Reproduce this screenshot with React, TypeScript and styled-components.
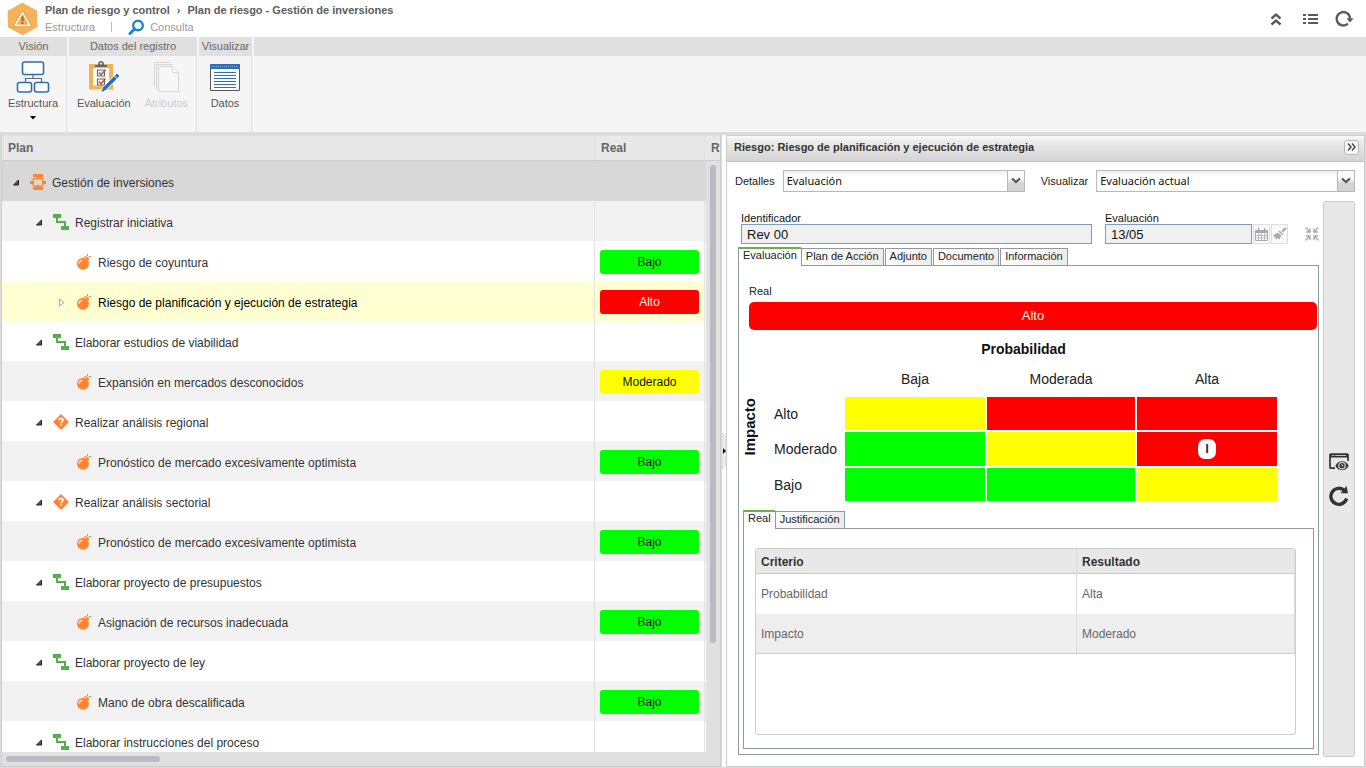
import React from "react";
import styled, { createGlobalStyle } from "styled-components";

const GlobalStyle = createGlobalStyle`
  * { box-sizing: border-box; }
  body {
    margin: 0;
    background: #dcdcdc;
    color: #222;
    font: 11px/14px "Liberation Sans", Arial, sans-serif;
  }
  button, input, select { font: inherit; color: inherit; margin: 0; }
  svg { display: block; flex: none; }
`;

const Shell = styled.div`
  display: flex;
  flex-direction: column;
  height: 100vh;
`;

/* ---------- title bar ---------- */

const TitleBar = styled.header`
  display: flex;
  align-items: center;
  flex: none;
  height: 37px;
  padding: 0 12px 0 7px;
  background: #fff;
`;

const Titles = styled.div`
  flex: 1;
  padding-left: 7px;
`;

const Crumbs = styled.nav`
  display: flex;
  gap: 7px;
  height: 17px;
  line-height: 16px;
  font-weight: bold;
  color: #5c5c5c;
`;

const CrumbLink = styled.a`
  color: inherit;
  text-decoration: none;
`;

const SubLinks = styled(Crumbs)`
  gap: 5px;
  font-weight: normal;
  color: #999;
  align-items: center;
`;

const Divider = styled.span`
  width: 1px;
  height: 10px;
  margin: 0 11px;
  background: #bbb;
`;

const TitleActions = styled.div`
  display: flex;
  align-items: center;
  gap: 14px;
`;

const IconButton = styled.button`
  display: flex;
  align-items: center;
  justify-content: center;
  min-width: 20px;
  padding: 0;
  border: 0;
  background: none;
`;

/* ---------- ribbon ---------- */

const Ribbon = styled.div`
  display: flex;
  flex: none;
  gap: 2px;
  height: 95px;
  background: #f5f5f5;
`;

const Group = styled.section<{ $width?: number }>`
  display: flex;
  flex-direction: column;
  flex: ${(p) => (p.$width ? `0 0 ${p.$width}px` : "1")};
`;

const GroupTitle = styled.h2`
  margin: 0;
  height: 19px;
  font-size: 11px;
  font-weight: normal;
  line-height: 19px;
  text-align: center;
  color: #666;
  background: #e0e0e0;
`;

const GroupBody = styled.div`
  display: flex;
  flex: 1;
  justify-content: center;
  gap: 14px;
  padding-top: 5px;
  border-right: 1px solid #e0e0e0;
`;

const RibbonButton = styled.button`
  display: flex;
  flex-direction: column;
  align-items: center;
  gap: 4px;
  padding: 0;
  border: 0;
  background: none;
  color: #555;
  line-height: 13px;
  &:disabled { color: #ccc; }
`;

/* ---------- workspace ---------- */

const Workspace = styled.main`
  display: grid;
  flex: 1;
  min-height: 0;
  grid-template-columns: minmax(0, 720fr) 5px minmax(0, 639fr);
  padding: 3px 1px 1px;
`;

const TreePanel = styled.section`
  display: flex;
  flex-direction: column;
  min-height: 0;
  border: 1px solid #ccc;
  border-top-color: #e0e0e0;
`;

const TreeBody = styled.div`
  position: relative;
  flex: 1;
  min-height: 0;
  overflow: hidden;
  background: #fff;
`;

const TreeTable = styled.table`
  width: 100%;
  table-layout: fixed;
  border-collapse: separate;
  border-spacing: 0;
  font-size: 12px;
  color: #333;
  th {
    height: 25px;
    padding: 0 6px;
    text-align: left;
    color: #666;
    background: #e8e8e8;
    border-bottom: 1px solid #ccc;
    overflow: hidden;
  }
  th + th, td + td { border-left: 1px solid #e2e2e2; }
`;

type Tone = "root" | "odd" | "even" | "selected";
const rowTones: Record<Tone, string> = {
  root: "#d8d8d8",
  odd: "#f2f2f2",
  even: "#fff",
  selected: "#ffffd2",
};

const TreeRow = styled.tr<{ $tone: Tone }>`
  background: ${(p) => rowTones[p.$tone]};
  color: ${(p) => (p.$tone === "selected" ? "#000" : "inherit")};
  td { height: 40px; padding: 0; }
  ${(p) => p.$tone === "root" && "td + td { border-left-color: #d8d8d8; }"}
`;

const Node = styled.div<{ $level: number }>`
  display: flex;
  align-items: center;
  gap: 6px;
  padding: 2px 0 0 ${(p) => p.$level * 23 + 10}px;
`;

const NodeName = styled.span`
  padding-top: 2px;
`;

const Toggle = styled.button`
  display: flex;
  align-items: center;
  width: 12px;
  height: 14px;
  padding: 0 0 0 1px;
  border: 0;
  background: none;
`;

type Risk = "Bajo" | "Moderado" | "Alto";
const riskColors: Record<Risk, string> = {
  Bajo: "#00ff00",
  Moderado: "#ffff00",
  Alto: "#ff0000",
};

const Badge = styled.div<{ $risk: Risk }>`
  margin: 2px 5px 0;
  height: 24px;
  border-radius: 3px;
  line-height: 24px;
  text-align: center;
  color: ${(p) => (p.$risk === "Alto" ? "#ffefd8" : "#111")};
  background: ${(p) => riskColors[p.$risk]};
`;

const VerticalScroll = styled.div`
  position: absolute;
  top: 25px;
  right: 0;
  bottom: 0;
  width: 14px;
  padding: 4px;
  background: #e0e0e0;
`;

const VerticalThumb = styled.div`
  width: 6px;
  height: 82%;
  border-radius: 3px;
  background: #bababf;
`;

const HorizontalScroll = styled.div`
  flex: none;
  height: 14px;
  padding: 4px;
  background: #e0e0e0;
`;

const HorizontalThumb = styled.div`
  width: 154px;
  height: 6px;
  border-radius: 3px;
  background: #bababf;
`;

const Splitter = styled.div`
  display: flex;
  align-items: center;
  border-left: 1px solid #dcdcdc;
  background: #fff;
`;

/* ---------- detail panel ---------- */

const DetailPanel = styled.section`
  display: flex;
  flex-direction: column;
  min-height: 0;
  border: 1px solid #ccc;
  background: #fff;
`;

const PanelHeader = styled.div`
  display: flex;
  align-items: center;
  justify-content: space-between;
  flex: none;
  height: 26px;
  padding: 0 5px 3px 7px;
  border-bottom: 1px solid #c4c4c4;
  background: linear-gradient(#fafafa, #ececec 20%, #d4d4d4);
`;

const PanelTitle = styled.h1`
  margin: 0;
  font-size: 11px;
  color: #333;
`;

const CollapseButton = styled.button`
  display: flex;
  align-items: center;
  justify-content: center;
  width: 15px;
  height: 15px;
  padding: 0;
  border: 1px solid #b8b8b8;
  border-radius: 3px;
  background: #f8f8f8;
`;

const Filters = styled.div`
  display: flex;
  align-items: center;
  flex: none;
  gap: 8px;
  padding: 8px 9px 9px 8px;
`;

const Combo = styled.span<{ $grow: number }>`
  display: grid;
  flex: ${(p) => p.$grow} 1 0;
  height: 22px;
  border: 1px solid #b5b8bd;
  background: linear-gradient(#f0f0f0, #fff 30%);
  & + label { margin-left: 8px; }
`;

const ComboSelect = styled.select`
  grid-area: 1 / 1;
  appearance: none;
  padding: 0 20px 0 3px;
  border: 0;
  border-radius: 0;
  background: none;
  font: 11px/18px "Noto Sans", sans-serif;
  color: #111;
`;

const ComboArrow = styled.span`
  grid-area: 1 / 1;
  display: flex;
  align-items: center;
  justify-content: center;
  justify-self: end;
  width: 17px;
  border-left: 1px solid #b5b8bd;
  background: linear-gradient(#fafafa 40%, #d4d4d4 60%);
  pointer-events: none;
`;

const DetailBody = styled.div`
  display: flex;
  flex: 1;
  min-height: 0;
  gap: 4px;
  padding: 0 9px 9px 11px;
`;

const DetailMain = styled.div`
  display: flex;
  flex: 1;
  flex-direction: column;
  min-width: 0;
  padding: 11px 0 2px;
`;

const SideStrip = styled.aside`
  display: flex;
  flex-direction: column;
  align-items: center;
  justify-content: center;
  gap: 14px;
  width: 32px;
  border: 1px solid #ccc;
  border-radius: 3px;
  background: #e8e8e8;
`;

const Fields = styled.div`
  display: flex;
  align-items: flex-end;
  margin-bottom: 3px;
  padding-left: 3px;
`;

const Field = styled.label<{ $width?: number }>`
  display: flex;
  flex-direction: column;
  flex: ${(p) => (p.$width ? `0 0 ${p.$width}px` : "1")};
  margin-right: ${(p) => (p.$width ? 1 : 13)}px;
  line-height: 12px;
  color: #111;
`;

const FieldInput = styled.input`
  width: 100%;
  height: 20px;
  padding: 0 5px;
  border: 1px solid #7f9db9;
  border-radius: 0;
  background: #f0f0f0;
  font-size: 13px;
`;

const FieldButton = styled.button`
  display: flex;
  align-items: center;
  justify-content: center;
  width: 17px;
  height: 20px;
  margin-right: 1px;
  padding: 0;
  border: 1px solid #ddd;
  background: #fafafa;
`;

const ShrinkButton = styled(IconButton)`
  min-width: 14px;
  height: 20px;
  margin-left: 16px;
`;

const TabBar = styled.div`
  display: flex;
  align-items: flex-end;
  flex: none;
  height: 19px;
  margin-bottom: -1px;
  z-index: 1;
`;

const Tab = styled.button<{ $active?: boolean }>`
  height: ${(p) => (p.$active ? 19 : 18)}px;
  margin-right: ${(p) => (p.$active ? 0 : 1)}px;
  padding: ${(p) => (p.$active ? "0 4px 5px" : "0 4px 2px")};
  border: 1px solid #8f9a9f;
  border-width: ${(p) => (p.$active ? "2px 0 0 1px" : "1px")};
  border-top-color: ${(p) => (p.$active ? "#6ab04c" : "#8f9a9f")};
  background: ${(p) => (p.$active ? "#fff" : "linear-gradient(90deg, #fff, #ececec)")};
  line-height: 12px;
`;

const TabPage = styled.div<{ $inner?: boolean }>`
  display: flex;
  flex-direction: column;
  flex: 1;
  min-height: 0;
  padding: ${(p) => (p.$inner ? "19px 17px 13px 11px" : "18px 0 5px")};
  border: 1px solid #8f9a9f;
`;

const RealLabel = styled.span`
  margin: 0 0 4px 10px;
`;

const RealBar = styled.div`
  flex: none;
  height: 28px;
  margin: 0 1px 5px 10px;
  border-radius: 5px;
  background: #ff0000;
  color: #ffefd8;
  font-size: 13px;
  line-height: 28px;
  text-align: center;
`;

const MatrixArea = styled.div`
  display: flex;
  align-items: center;
  flex: none;
  margin-bottom: 7px;
`;

const AxisLabel = styled.span`
  width: 22px;
  padding-bottom: 16px;
  margin-right: 7px;
  font-size: 15px;
  line-height: 22px;
  font-weight: bold;
  color: #111;
  writing-mode: vertical-rl;
  transform: rotate(180deg);
`;

const Matrix = styled.table`
  width: 511px;
  table-layout: fixed;
  border-spacing: 2px;
  font-size: 14px;
  color: #222;
  th { height: 33px; padding: 0; font-weight: normal; }
  thead tr:first-child th { height: 24px; font-weight: bold; color: #111; }
  thead tr:last-child th, thead tr:last-child td { height: 32px; padding: 0; }
  tbody th { padding-left: 4px; text-align: left; }
  tbody tr:nth-child(2) th { height: 34px; }
`;

const MatrixCell = styled.td<{ $risk: Risk }>`
  padding: 0;
  text-align: center;
  background: ${(p) => riskColors[p.$risk]};
`;

const Marker = styled.span`
  display: block;
  width: 18px;
  height: 20px;
  margin: 0 auto;
  border-radius: 7px;
  background: #fff;
  color: #333;
  font-size: 13px;
  font-weight: bold;
  line-height: 20px;
`;

const SubTabs = styled.div`
  display: flex;
  flex: 1;
  flex-direction: column;
  min-height: 0;
  padding: 0 4px;
`;

const ResultBox = styled.div`
  flex: 1;
  min-height: 0;
  border: 1px solid #ccc;
  border-radius: 3px;
`;

const ResultTable = styled.table`
  width: 100%;
  table-layout: fixed;
  border-spacing: 0;
  font-size: 12px;
  color: #666;
  th, td { height: 40px; padding: 0 5px; text-align: left; border-right: 1px solid #ddd; }
  th:first-child, td:first-child { border-right: 0; }
  th + th, td + td { border-left: 1px solid #ddd; }
  th { height: 25px; padding-top: 2px; color: #333; background: #e8e8e8; border-bottom: 1px solid #ccc; }
  tbody tr:last-child td { background: #eee; border-bottom: 1px solid #ccc; }
`;

/* ---------- icons ---------- */

const AppLogo = () => (
  <svg width="31" height="34" viewBox="0 0 31 34">
    <path d="M15.5 2 29 9.500V24.500L15.500 32 2 24.500V9.500Z" fill="#f4b25a" stroke="#f4b25a" strokeWidth="2.500" strokeLinejoin="round" />
    <path d="M15.500 10.500 23 23.500H8Z" fill="#f0a848" stroke="#d79a55" strokeWidth="3" strokeLinejoin="round" />
    <path d="M15.500 10.500 23 23.500H8Z" fill="#f3b158" stroke="#fff" strokeWidth="1.500" strokeLinejoin="round" />
    <path d="M15.500 14.500v4.500M15.500 20v2" stroke="#a0581c" strokeWidth="1.800" />
  </svg>
);

const SearchIcon = () => (
  <svg width="17" height="16" viewBox="0 0 17 16">
    <circle cx="10" cy="6.500" r="4.800" fill="none" stroke="#1d86c8" strokeWidth="2.400" />
    <path d="M6.500 10 2 14.500" stroke="#1d86c8" strokeWidth="3" strokeLinecap="round" />
  </svg>
);

const UpIcon = () => (
  <svg width="20" height="20" viewBox="0 0 20 20" fill="none" stroke="#5a5a5a" strokeWidth="2.400">
    <path d="M5.500 9.500 10 5.500l4.500 4M5.500 15.500 10 11.500l4.500 4" />
  </svg>
);

const ListIcon = () => (
  <svg width="20" height="20" viewBox="0 0 20 20" fill="#5a5a5a">
    <path d="M3 5h3v2H3zM8 5h10v2H8zM3 9h3v2H3zM8 9h10v2H8zM3 13h3v2H3zM8 13h10v2H8z" />
  </svg>
);

const ReloadIcon = () => (
  <svg width="20" height="20" viewBox="0 0 20 20">
    <path d="M14 14.500A6.700 6.700 0 1 1 16 9.500" fill="none" stroke="#5a5a5a" strokeWidth="2.400" />
    <path d="M12.500 9.200H19.500L16 13.500Z" fill="#5a5a5a" />
  </svg>
);

const StructureIcon = () => (
  <svg width="34" height="32" viewBox="0 0 34 32">
    <path d="M17 14v4M9.500 21v-3.500h16V21" fill="none" stroke="#666" strokeWidth="1.200" />
    <g fill="#fff" stroke="#2e6db0" strokeWidth="1.600">
      <rect x="6.500" y="1" width="21" height="12.500" rx="2" />
      <rect x="1.500" y="21.500" width="14" height="9.500" rx="2" />
      <rect x="18.500" y="21.500" width="14" height="9.500" rx="2" />
    </g>
  </svg>
);

const EvaluationIcon = () => (
  <svg width="32" height="32" viewBox="0 0 32 32">
    <path d="M3 5h20v21.500H3z" fill="#fff" stroke="#f3b158" strokeWidth="4" />
    <path d="M7 6V4h3c0-2.500 1-4 3-4s3 1.500 3 4h3v2Z" fill="#666" />
    <circle cx="13" cy="2.500" r="1" fill="#fff" />
    <path d="M9.500 9h7v6h-7zM9.500 18h7v6h-7z" fill="#fff" stroke="#666" strokeWidth="1.200" />
    <path d="m11 11.500 2 2.200 4.500-5M11 20.500l2 2.200 4.500-5" fill="none" stroke="#b0622c" strokeWidth="1.700" />
    <path d="M12.500 32 14.500 26.500 29 12l3 3-14.500 14.500Z" fill="#2f6fb5" stroke="#fff" strokeWidth="1" />
    <path d="m26 14.500 3.500 3.500" stroke="#fff" strokeWidth="1" />
  </svg>
);

const AttributesIcon = () => (
  <svg width="28" height="32" viewBox="0 0 28 32" fill="#f7f7f7" stroke="#d6d6d6">
    <path d="M2.500 26.500v-25h16M4.500 28.500v-25h16" fill="none" />
    <path d="M6.500 5.500h14l6 6v19h-20z" />
    <path d="M20.500 5.500v6h6" />
  </svg>
);

const DataIcon = () => (
  <svg width="32" height="32" viewBox="0 0 32 32">
    <path d="M1.500 4.500h29v25h-29z" fill="#fff" stroke="#555" />
    <path d="M1 3h30v5H1z" fill="#2f6fb5" />
    <path d="M3 5.500h26" stroke="#79a9dc" strokeDasharray="1 1" />
    <path d="M5 11.500h22M5 14.500h22M5 17.500h22M5 20.500h22M5 23.500h22M5 26.500h22" stroke="#2f6fb5" strokeWidth="1.200" />
  </svg>
);

const CaretIcon = () => (
  <svg width="6" height="6" viewBox="0 0 6 6"><path d="M0 2h6L3 5.500z" fill="#000" /></svg>
);

const ExpandedMark = () => (
  <svg width="7" height="7" viewBox="0 0 7 7">
    <path d="M5.500 1v5h-5z" fill="#555" stroke="#222" strokeWidth="1" />
  </svg>
);

const CollapsedMark = () => (
  <svg width="7" height="9" viewBox="0 0 7 9">
    <path d="M.5 1v7l4.500-3.500z" fill="#fff" stroke="#aaa" />
  </svg>
);

const ProjectIcon = () => (
  <svg width="16" height="16" viewBox="0 0 16 16" fill="#ff8533">
    <path d="M3 0h10v3H3zM7 3h2v2H7zM7 11h2v2H7zM3 13h10v3H3zM0 7h4v3H0zM12 7h4v3h-4z" />
    <path d="M3 6q0-1.500 1.500-1.500h7Q13 4.500 13 6v5q0 1-1.500 1h-7Q3 12 3 11z" fill="none" stroke="#ff8533" strokeWidth="1.300" />
  </svg>
);

const ProcessIcon = () => (
  <svg width="16" height="16" viewBox="0 0 16 16" fill="#52b04c">
    <path d="M0 0h8v4H5v3h8v5h3v4H8v-4h3V9H3V4H0z" />
  </svg>
);

const DecisionIcon = () => (
  <svg width="16" height="16" viewBox="0 0 16 16">
    <path d="m8 0 8 8-8 8-8-8z" fill="#ff8533" />
    <path d="M6 6.200C6 3.800 10 3.800 10 6.200 10 7.600 8 7.600 8 9.200M8 10.500v1.600" fill="none" stroke="#fff" strokeWidth="1.600" />
  </svg>
);

const BombIcon = () => (
  <svg width="16" height="16" viewBox="0 0 16 16">
    <circle cx="7" cy="9.700" r="6" fill="#ff8533" />
    <path d="m9 3.500 3-.5 1 1-.5 3z" fill="#ff8533" />
    <path d="M3 9.700Q3.200 6.800 6 6.200" fill="none" stroke="#ffd9bd" strokeWidth="1.500" />
    <path d="M11.500 0v2M8.500 2.500h2M13 2.500h2M11.500 3v1" stroke="#ff8533" />
  </svg>
);

const ArrowDown = () => (
  <svg width="10" height="8" viewBox="0 0 10 8">
    <path d="M1 1.500 5 5l4-3.500" fill="none" stroke="#555" strokeWidth="2.200" />
  </svg>
);

const SplitHandle = () => (
  <svg width="4" height="36" viewBox="0 0 4 36">
    <path d="M0 0 4 4v28l-4 4z" fill="#eee" stroke="#ccc" strokeWidth=".7" />
    <path d="M1 15v6l3-3z" fill="#111" />
  </svg>
);

const ChevronsIcon = () => (
  <svg width="9" height="8" viewBox="0 0 9 8" fill="none" stroke="#444" strokeWidth="1.400">
    <path d="m1 .5 3 3.500-3 3.500M5 .5 8 4 5 7.500" />
  </svg>
);

const CalendarIcon = () => (
  <svg width="13" height="13" viewBox="0 0 13 13">
    <path d="M.5 2.500h12v10H.5z" fill="#fff" stroke="#aaa" />
    <path d="M0 2h13v3H0z" fill="#aaa" />
    <path d="M3.500 0v3M9.500 0v3" stroke="#999" />
    <path d="M3.500 5v7M6.500 5v7M9.500 5v7M1 7.500h11M1 10h11" stroke="#bbb" />
  </svg>
);

const BrushIcon = () => (
  <svg width="14" height="14" viewBox="0 0 14 14" fill="#aaa">
    <path d="m8.500 4 3-3.500q2-.5 2 1.500L10 5.500z" />
    <path d="m6.500 3.500 4 4-1 1L5.500 4.500z" />
    <path d="M5 5.500 8.500 9 6 12.500 4.500 11 3.500 12.500 0 8.500z" />
  </svg>
);

const ShrinkIcon = () => (
  <svg width="14" height="14" viewBox="0 0 14 14" fill="none" stroke="#aaa" strokeWidth="1.400">
    <path d="M.5.5 5 5M5 1.500V5H1M13.500.500 9 5M9 1.500V5h4M.5 13.500 5 9M1 9h4v4M13.500 13.500 9 9M9 13V9h4" />
  </svg>
);

const PreviewIcon = () => (
  <svg width="20" height="20" viewBox="0 0 20 20">
    <path d="M6 16.200H1.800Q1 16.200 1 15.400V2.800Q1 2 1.800 2h16.400q.8 0 .8.800V9" fill="none" stroke="#333" strokeWidth="1.700" />
    <path d="M1 2h18v3.500H1z" fill="#333" />
    <path d="M3 3.500h2M6 3.500h11" stroke="#e8e8e8" strokeWidth=".8" />
    <path d="M6.300 13.700Q9 9.300 13 9.300t6.700 4.400Q17 18.300 13 18.300t-6.700-4.600z" fill="#333" />
    <circle cx="13" cy="13.700" r="3.200" fill="#333" stroke="#e8e8e8" strokeWidth="1.100" />
    <path d="M13 12.200v1.700h1.300" stroke="#e8e8e8" fill="none" strokeWidth=".9" />
  </svg>
);

const RedoIcon = () => (
  <svg width="20" height="20" viewBox="0 0 20 20">
    <path d="M15.500 4.600A8 8 0 1 0 17.600 12.500" fill="none" stroke="#333" strokeWidth="3.400" />
    <path d="M17.500 0 19 7.300H11.500z" fill="#333" />
  </svg>
);

/* ---------- data ---------- */

type Kind = "project" | "process" | "decision" | "risk";
const kindIcons: Record<Kind, React.FC> = {
  project: ProjectIcon,
  process: ProcessIcon,
  decision: DecisionIcon,
  risk: BombIcon,
};

interface PlanItem {
  name: string;
  kind: Kind;
  risk?: Risk;
  selected?: boolean;
}

const plan: PlanItem[] = [
  { name: "Gestión de inversiones", kind: "project" },
  { name: "Registrar iniciativa", kind: "process" },
  { name: "Riesgo de coyuntura", kind: "risk", risk: "Bajo" },
  { name: "Riesgo de planificación y ejecución de estrategia", kind: "risk", risk: "Alto", selected: true },
  { name: "Elaborar estudios de viabilidad", kind: "process" },
  { name: "Expansión en mercados desconocidos", kind: "risk", risk: "Moderado" },
  { name: "Realizar análisis regional", kind: "decision" },
  { name: "Pronóstico de mercado excesivamente optimista", kind: "risk", risk: "Bajo" },
  { name: "Realizar análisis sectorial", kind: "decision" },
  { name: "Pronóstico de mercado excesivamente optimista", kind: "risk", risk: "Bajo" },
  { name: "Elaborar proyecto de presupuestos", kind: "process" },
  { name: "Asignación de recursos inadecuada", kind: "risk", risk: "Bajo" },
  { name: "Elaborar proyecto de ley", kind: "process" },
  { name: "Mano de obra descalificada", kind: "risk", risk: "Bajo" },
  { name: "Elaborar instrucciones del proceso", kind: "process" },
];

const levels: Record<Kind, number> = { project: 0, process: 1, decision: 1, risk: 2 };

const matrix: { impact: Risk; cells: Risk[] }[] = [
  { impact: "Alto", cells: ["Moderado", "Alto", "Alto"] },
  { impact: "Moderado", cells: ["Bajo", "Moderado", "Alto"] },
  { impact: "Bajo", cells: ["Bajo", "Bajo", "Moderado"] },
];

function toneOf(item: PlanItem, index: number): Tone {
  if (item.selected) return "selected";
  if (index === 0) return "root";
  return index % 2 ? "odd" : "even";
}

/* ---------- page ---------- */

function PlanTree() {
  return (
    <TreePanel>
      <TreeBody>
        <TreeTable>
          <colgroup>
            <col />
            <col width="110" />
            <col width="16" />
          </colgroup>
          <thead>
            <tr><th>Plan</th><th>Real</th><th>R</th></tr>
          </thead>
          <tbody>
            {plan.map((item, i) => {
              const Icon = kindIcons[item.kind];
              return (
                <TreeRow key={i} $tone={toneOf(item, i)}>
                  <td>
                    <Node $level={levels[item.kind]}>
                      <Toggle aria-label={item.name}>
                        {item.kind !== "risk" && <ExpandedMark />}
                        {item.selected && <CollapsedMark />}
                      </Toggle>
                      <Icon />
                      <NodeName>{item.name}</NodeName>
                    </Node>
                  </td>
                  <td>{item.risk && <Badge $risk={item.risk}>{item.risk}</Badge>}</td>
                  <td />
                </TreeRow>
              );
            })}
          </tbody>
        </TreeTable>
        <VerticalScroll><VerticalThumb /></VerticalScroll>
      </TreeBody>
      <HorizontalScroll><HorizontalThumb /></HorizontalScroll>
    </TreePanel>
  );
}

function RiskMatrix() {
  return (
    <MatrixArea>
      <AxisLabel>Impacto</AxisLabel>
      <Matrix>
        <colgroup>
          <col width="73" /><col width="140" /><col width="148" /><col width="140" />
        </colgroup>
        <thead>
          <tr><th colSpan={4}>Probabilidad</th></tr>
          <tr><td /><th>Baja</th><th>Moderada</th><th>Alta</th></tr>
        </thead>
        <tbody>
          {matrix.map((row) => (
            <tr key={row.impact}>
              <th scope="row">{row.impact}</th>
              {row.cells.map((risk, i) => (
                <MatrixCell key={i} $risk={risk}>
                  {row.impact === "Moderado" && i === 2 && <Marker>I</Marker>}
                </MatrixCell>
              ))}
            </tr>
          ))}
        </tbody>
      </Matrix>
    </MatrixArea>
  );
}

function RiskDetail() {
  return (
    <DetailPanel>
      <PanelHeader>
        <PanelTitle>Riesgo: Riesgo de planificación y ejecución de estrategia</PanelTitle>
        <CollapseButton aria-label="Contraer"><ChevronsIcon /></CollapseButton>
      </PanelHeader>
      <Filters>
        <label htmlFor="detalles">Detalles</label>
        <Combo $grow={242}>
          <ComboSelect id="detalles"><option>Evaluación</option></ComboSelect>
          <ComboArrow><ArrowDown /></ComboArrow>
        </Combo>
        <label htmlFor="visualizar">Visualizar</label>
        <Combo $grow={259}>
          <ComboSelect id="visualizar"><option>Evaluación actual</option></ComboSelect>
          <ComboArrow><ArrowDown /></ComboArrow>
        </Combo>
      </Filters>
      <DetailBody>
        <DetailMain>
          <Fields>
            <Field>Identificador<FieldInput readOnly value="Rev 00" /></Field>
            <Field $width={147}>Evaluación<FieldInput readOnly value="13/05" /></Field>
            <FieldButton aria-label="Calendario"><CalendarIcon /></FieldButton>
            <FieldButton aria-label="Limpiar"><BrushIcon /></FieldButton>
            <ShrinkButton aria-label="Reducir"><ShrinkIcon /></ShrinkButton>
          </Fields>
          <TabBar>
            <Tab $active>Evaluación</Tab>
            <Tab>Plan de Acción</Tab>
            <Tab>Adjunto</Tab>
            <Tab>Documento</Tab>
            <Tab>Información</Tab>
          </TabBar>
          <TabPage>
            <RealLabel>Real</RealLabel>
            <RealBar>Alto</RealBar>
            <RiskMatrix />
            <SubTabs>
              <TabBar>
                <Tab $active>Real</Tab>
                <Tab>Justificación</Tab>
              </TabBar>
              <TabPage $inner>
                <ResultBox>
                  <ResultTable>
                    <colgroup><col /><col width="219" /></colgroup>
                    <thead>
                      <tr><th>Criterio</th><th>Resultado</th></tr>
                    </thead>
                    <tbody>
                      <tr><td>Probabilidad</td><td>Alta</td></tr>
                      <tr><td>Impacto</td><td>Moderado</td></tr>
                    </tbody>
                  </ResultTable>
                </ResultBox>
              </TabPage>
            </SubTabs>
          </TabPage>
        </DetailMain>
        <SideStrip>
          <IconButton aria-label="Vista previa"><PreviewIcon /></IconButton>
          <IconButton aria-label="Actualizar"><RedoIcon /></IconButton>
        </SideStrip>
      </DetailBody>
    </DetailPanel>
  );
}

export default function App() {
  return (
    <Shell>
      <GlobalStyle />
      <TitleBar>
        <AppLogo />
        <Titles>
          <Crumbs>
            <CrumbLink href="#control">Plan de riesgo y control</CrumbLink>
            <span>›</span>
            <CrumbLink href="#inversiones">Plan de riesgo - Gestión de inversiones</CrumbLink>
          </Crumbs>
          <SubLinks>
            <CrumbLink href="#estructura">Estructura</CrumbLink>
            <Divider />
            <SearchIcon />
            <CrumbLink href="#consulta">Consulta</CrumbLink>
          </SubLinks>
        </Titles>
        <TitleActions>
          <IconButton aria-label="Contraer cinta"><UpIcon /></IconButton>
          <IconButton aria-label="Lista"><ListIcon /></IconButton>
          <IconButton aria-label="Recargar"><ReloadIcon /></IconButton>
        </TitleActions>
      </TitleBar>
      <Ribbon>
        <Group $width={67}>
          <GroupTitle>Visión</GroupTitle>
          <GroupBody>
            <RibbonButton><StructureIcon />Estructura<CaretIcon /></RibbonButton>
          </GroupBody>
        </Group>
        <Group $width={128}>
          <GroupTitle>Datos del registro</GroupTitle>
          <GroupBody>
            <RibbonButton><EvaluationIcon />Evaluación</RibbonButton>
            <RibbonButton disabled><AttributesIcon />Atributos</RibbonButton>
          </GroupBody>
        </Group>
        <Group $width={53}>
          <GroupTitle>Visualizar</GroupTitle>
          <GroupBody>
            <RibbonButton><DataIcon />Datos</RibbonButton>
          </GroupBody>
        </Group>
        <Group>
          <GroupTitle aria-hidden />
        </Group>
      </Ribbon>
      <Workspace>
        <PlanTree />
        <Splitter><SplitHandle /></Splitter>
        <RiskDetail />
      </Workspace>
    </Shell>
  );
}
